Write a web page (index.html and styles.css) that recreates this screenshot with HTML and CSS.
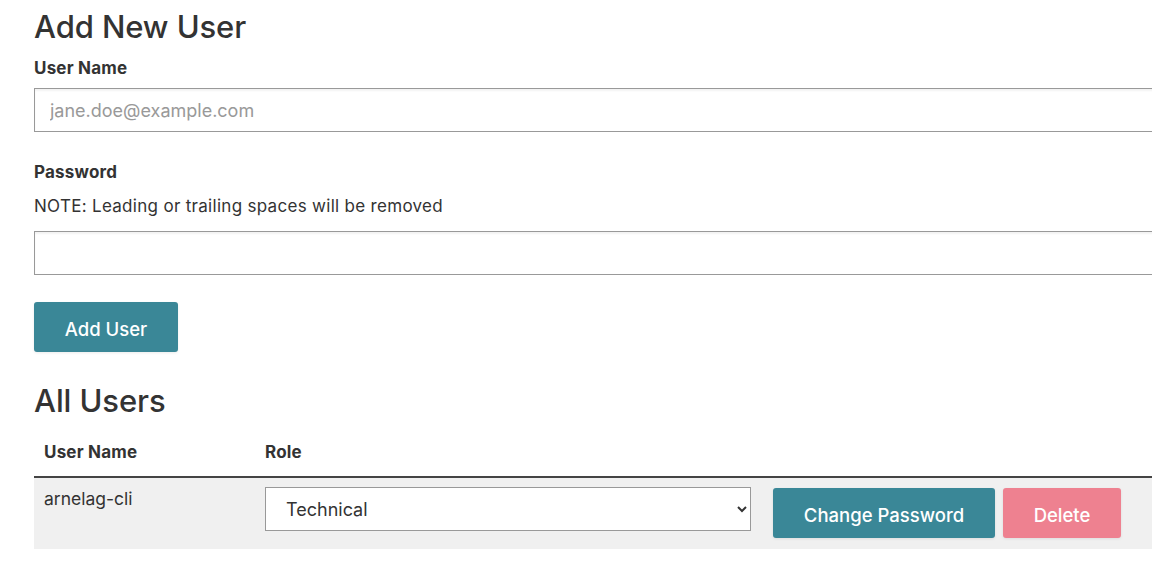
FILE: index.html
```
<!DOCTYPE html>
<html>
	<head>
		<meta charset="utf-8">
		<title>Users</title>
		<link rel="stylesheet" href="styles.css">
	</head>
	<body>
		<div class="page">
			<h1>Add New User</h1>
			<form class="add_form">
				<label class="field_label" for="user_name">User Name</label>
				<input class="text_input" id="user_name" type="text" placeholder="jane.doe@example.com">

				<label class="field_label pw_label" for="user_pw">Password</label>
				<p class="note">NOTE: Leading or trailing spaces will be removed</p>
				<input class="text_input pw_input" id="user_pw" type="password">

				<button class="btn btn_teal add_btn" type="button">Add User</button>
			</form>

			<h1 class="all_title">All Users</h1>
			<table class="users">
				<thead>
					<tr>
						<th class="col_name">User Name</th>
						<th class="col_role">Role</th>
						<th class="col_actions"></th>
					</tr>
				</thead>
				<tbody>
					<tr>
						<td class="cell_name">arnelag-cli</td>
						<td>
							<select class="role_select">
								<option>Technical</option>
								<option>Admin</option>
								<option>Read Only</option>
							</select>
						</td>
						<td class="cell_actions">
							<button class="btn btn_teal" type="button">Change Password</button>
							<button class="btn btn_pink" type="button">Delete</button>
						</td>
					</tr>
				</tbody>
			</table>
		</div>
	</body>
</html>
```
FILE: styles.css
```
* {
	margin: 0;
	padding: 0;
	box-sizing: border-box;
}

html,
body {
	overflow: hidden;
}

body {
	background: #fff;
	color: #333;
	font-family: Inter, "Open Sans", sans-serif;
	font-size: 17px;
}

.page {
	width: 1300px;
	padding: 8px 0 0 34px;
}

h1 {
	font-size: 31px;
	font-weight: 500;
	line-height: 38px;
	letter-spacing: -0.1px;
}

.add_form {
	display: flex;
	flex-direction: column;
	align-items: flex-start;
}

.field_label {
	display: block;
	font-size: 17px;
	font-weight: 650;
	line-height: 20px;
	letter-spacing: 0.2px;
	margin-top: 12px;
}

.pw_label {
	margin-top: 30px;
}

.note {
	font-size: 17px;
	line-height: 20px;
	letter-spacing: 0.3px;
	margin-top: 14px;
}

.text_input {
	width: 100%;
	height: 44px;
	margin-top: 10px;
	border: 1px solid #999;
	box-shadow: inset 0 2px 2px rgba(0, 0, 0, 0.05);
	padding: 0 15px;
	font-family: inherit;
	font-size: 18px;
	color: #333;
	outline: none;
}

.pw_input {
	margin-top: 15px;
}

.text_input::placeholder {
	color: #999;
}

.btn {
	border: none;
	border-radius: 3px;
	color: #fff;
	font-family: inherit;
	font-size: 18.5px;
	font-weight: 500;
	height: 50px;
	padding-top: 3px;
	cursor: pointer;
	box-shadow: 0 1px 3px rgba(0, 0, 0, 0.08);
}

.btn_teal {
	background: #3a8797;
}

.btn_pink {
	background: #ee8190;
}

.add_btn {
	width: 144px;
	margin-top: 27px;
}

.all_title {
	margin-top: 30px;
}

.users {
	width: 100%;
	margin-top: 17px;
	border-collapse: collapse;
	text-align: left;
}

.users th {
	font-size: 17px;
	font-weight: 650;
	line-height: 20px;
	letter-spacing: 0.2px;
	padding: 5px 10px 14px;
	border-bottom: 2px solid #444;
}

.col_name {
	width: 221px;
}

.col_role {
	width: 508px;
}

.users tbody tr {
	background: #f0f0f0;
}

.users td {
	padding: 9px 10px 11px;
	vertical-align: top;
}

.cell_name {
	font-size: 17.5px;
	line-height: 20px;
}

.users .cell_name {
	padding-top: 11px;
}

.role_select {
	width: 486px;
	height: 44px;
	border: 1px solid #999;
	border-radius: 0;
	background: #fff;
	padding: 0 16px;
	font-family: inherit;
	font-size: 18px;
	color: #333;
}

.cell_actions {
	display: flex;
	gap: 8px;
}

.cell_actions .btn {
	height: 50px;
	margin-top: 1px;
}

.cell_actions .btn_teal {
	width: 222px;
}

.cell_actions .btn_pink {
	width: 118px;
}
```
